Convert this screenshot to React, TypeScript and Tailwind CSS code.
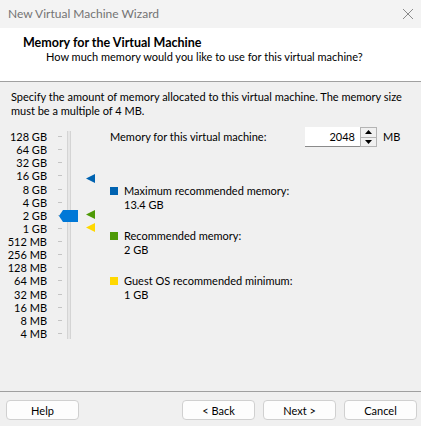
import React from 'react';

const scale = ['128 GB', '64 GB', '32 GB', '16 GB', '8 GB', '4 GB', '2 GB', '1 GB', '512 MB', '256 MB', '128 MB', '64 MB', '32 MB', '16 MB', '8 MB', '4 MB'];

const Marker: React.FC<{ color: string; top: number }> = ({ color, top }) => (
  <svg className="absolute left-[24px]" style={{ top }} width="9" height="9" viewBox="0 0 9 9">
    <polygon points="0,4.5 9,0 9,9" fill={color} />
  </svg>
);

const Legend: React.FC<{ color: string; label: string; value: string }> = ({ color, label, value }) => (
  <div className="flex flex-col h-[28px]">
    <div className="flex items-center h-[14px]">
      <span className={`w-[8px] h-[8px] shrink-0 ${color}`} />
      <span className="ml-[6px] leading-[14px]">{label}</span>
    </div>
    <div className="pl-[14px] h-[14px] leading-[14px]">{value}</div>
  </div>
);

const Button: React.FC<{ label: string }> = ({ label }) => (
  <button className="w-[73px] h-[20px] rounded-[4px] border border-[#d0d0d0] bg-[#fdfdfd] text-black leading-none">
    {label}
  </button>
);

export default function App() {
  return (
    <div className="w-[421px] h-[426px] bg-[#f0f0f0] flex flex-col text-[11px] leading-[14px] text-black font-['Lato',sans-serif] overflow-hidden">
      {/* title bar */}
      <div className="h-[28px] flex items-center justify-between pl-[8px] pr-[5px] bg-[#f3f3f3]">
        <span className="text-[#737373] text-[12px]">New Virtual Machine Wizard</span>
        <svg width="12" height="12" viewBox="0 0 12 12" className="mr-[2px]">
          <path d="M1 1 L11 11 M11 1 L1 11" stroke="#8a8a8a" strokeWidth="1" />
        </svg>
      </div>

      {/* header */}
      <div className="h-[54px] bg-white border-b border-[#a0a0a0] pl-[23px] pt-[8px]">
        <div className="font-bold text-[12.5px]">Memory for the Virtual Machine</div>
        <div className="pl-[23px]">How much memory would you like to use for this virtual machine?</div>
      </div>

      {/* body */}
      <div className="flex-1 px-[11px] pt-[8px]">
        <p>
          Specify the amount of memory allocated to this virtual machine. The memory size must be a multiple of 4 MB.
        </p>

        <div className="flex mt-[12px]">
          {/* slider */}
          <div className="flex w-[98px]">
            <div className="flex flex-col w-[36px] items-end">
              {scale.map((s) => (
                <div key={s} className="h-[13.13px] leading-[13px] whitespace-nowrap">{s}</div>
              ))}
            </div>
            <div className="flex flex-col w-[8px] items-end ml-[7px]">
              {scale.map((s) => (
                <div key={s} className="h-[13.13px] flex items-center">
                  <span className="w-[4px] h-px bg-[#c4c4c4]" />
                </div>
              ))}
            </div>
            <div className="relative flex-1">
              <div className="absolute left-[5px] top-[1px] w-[4px] h-[208px] bg-[#e6e6e6] border-x border-[#d4d4d4]" />
              <svg className="absolute left-[-3px] top-[80px]" width="19" height="12" viewBox="0 0 19 12">
                <polygon points="0,6 4,0 19,0 19,12 4,12" fill="#0078d7" />
              </svg>
              <Marker color="#0063b1" top={44} />
              <Marker color="#4e9a06" top={80} />
              <Marker color="#ffd800" top={93} />
            </div>
          </div>

          {/* right */}
          <div className="flex-1 flex flex-col pl-[1px]">
            <div className="flex items-center h-[20px] -mt-[3px]">
              <span className="w-[195px]">Memory for this virtual machine:</span>
              <div className="w-[55px] h-[20px] bg-white border-b border-[#8a8a8a] flex items-center justify-end pr-[5px]">2048</div>
              <div className="flex flex-col w-[17px] h-[20px] border border-[#b4b4b4] bg-[#f0f0f0]">
                <div className="flex-1 flex items-center justify-center border-b border-[#b4b4b4]">
                  <svg width="7" height="4" viewBox="0 0 7 4"><polygon points="3.5,0 7,4 0,4" fill="#000" /></svg>
                </div>
                <div className="flex-1 flex items-center justify-center">
                  <svg width="7" height="4" viewBox="0 0 7 4"><polygon points="0,0 7,0 3.5,4" fill="#000" /></svg>
                </div>
              </div>
              <span className="ml-[6px]">MB</span>
            </div>

            <div className="flex flex-col gap-[17px] mt-[37px]">
              <Legend color="bg-[#0063b1]" label="Maximum recommended memory:" value="13.4 GB" />
              <Legend color="bg-[#4e9a06]" label="Recommended memory:" value="2 GB" />
              <Legend color="bg-[#ffd800]" label="Guest OS recommended minimum:" value="1 GB" />
            </div>
          </div>
        </div>
      </div>

      {/* footer */}
      <div className="h-[35px] border-t border-[#a0a0a0] flex items-start pt-[8px] px-[6px]">
        <Button label="Help" />
        <div className="flex-1" />
        <div className="flex gap-[8px] mr-[-2px]">
          <Button label="< Back" />
          <Button label="Next >" />
          <Button label="Cancel" />
        </div>
      </div>
    </div>
  );
}
